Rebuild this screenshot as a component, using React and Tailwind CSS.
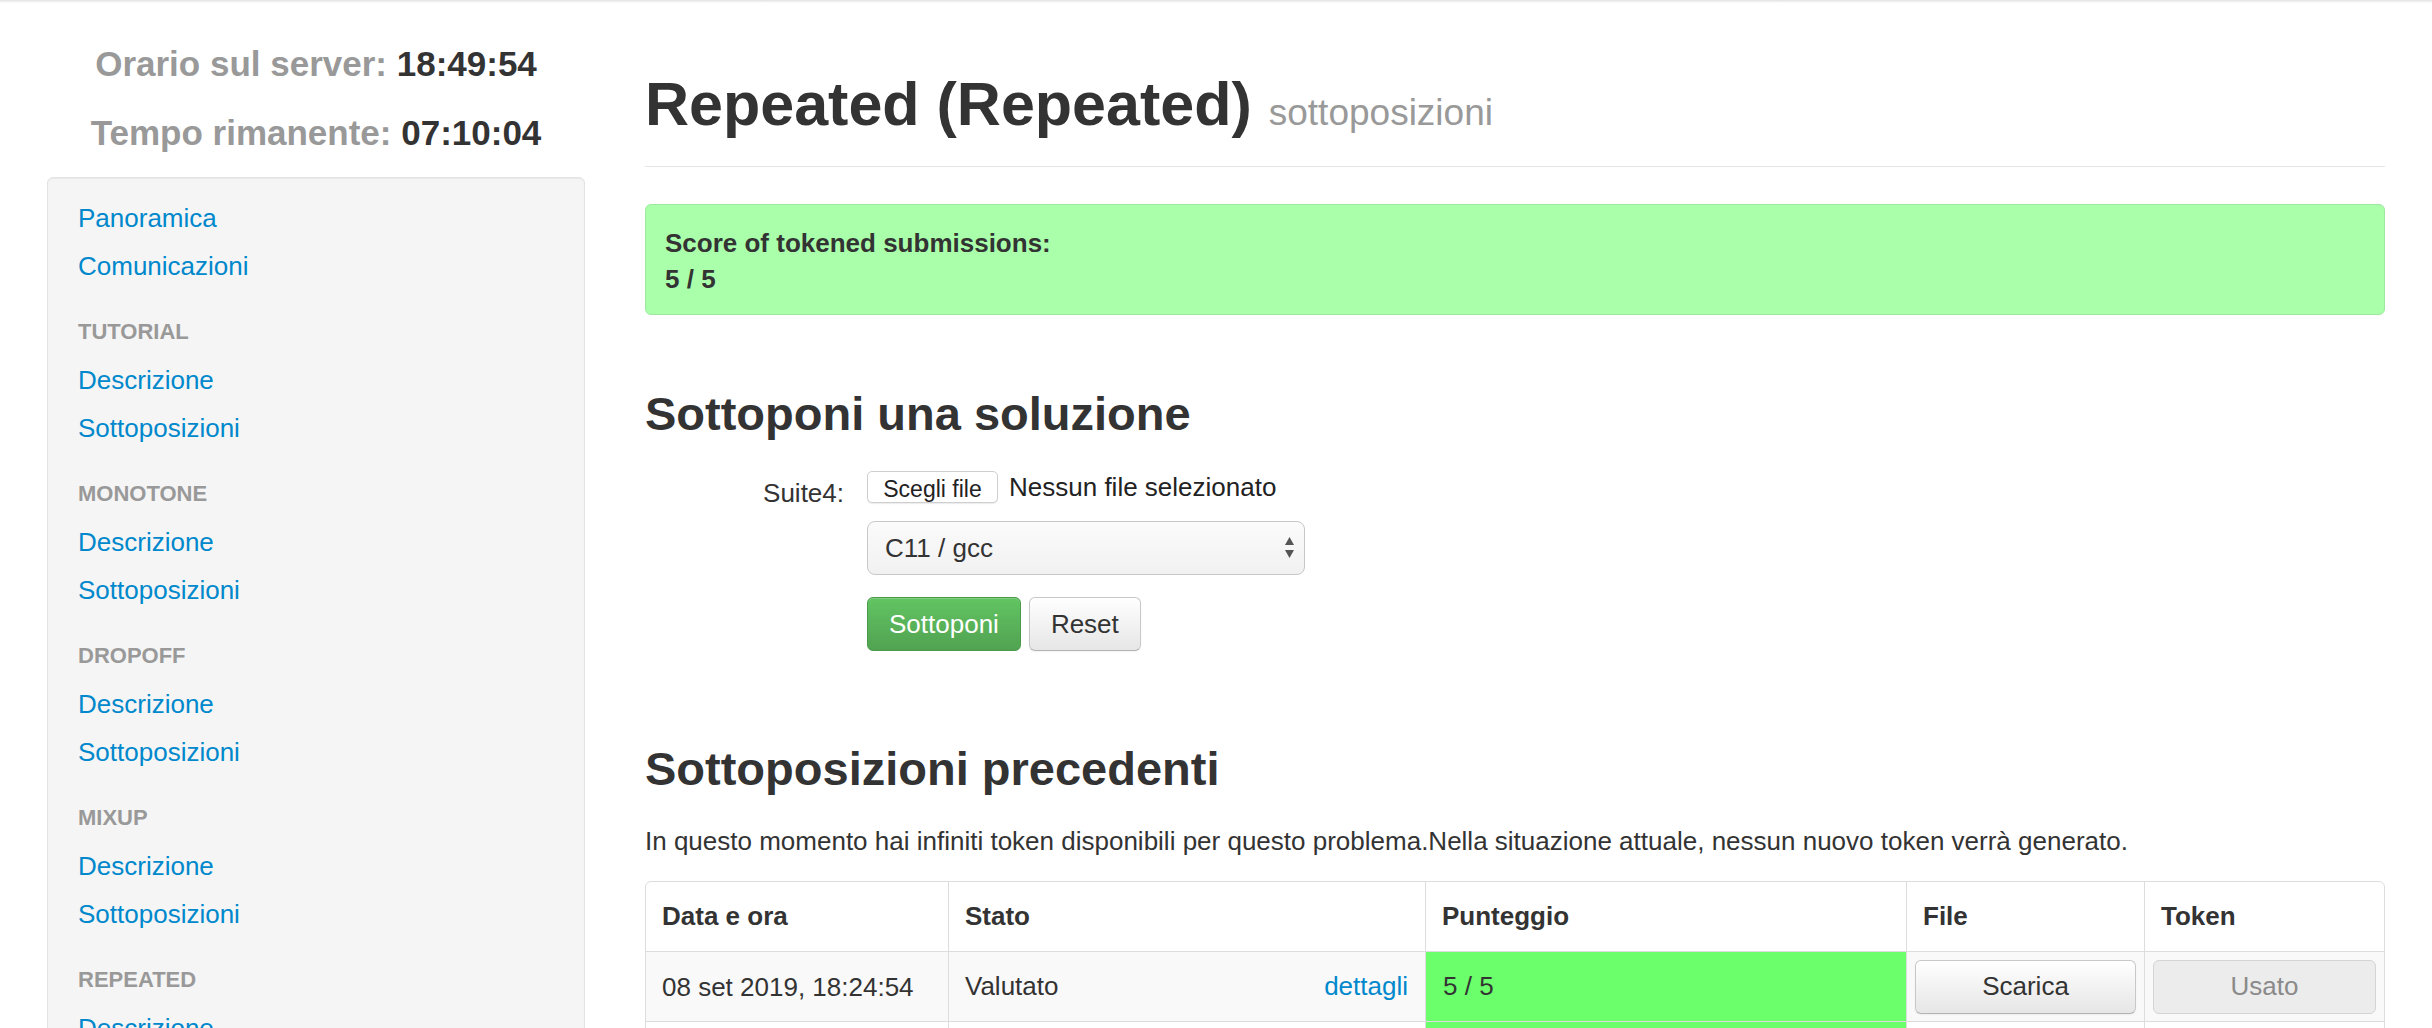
import React from 'react';

const tasks = ['Tutorial', 'Monotone', 'Dropoff', 'Mixup', 'Repeated'];

const btnLight =
  'bg-linear-to-b from-white to-[#e6e6e6] border border-[#c8c8c8] border-b-[#b3b3b3] rounded-[6px] text-[#333] shadow-[inset_0_1px_0_rgba(255,255,255,0.2),0_1px_2px_rgba(0,0,0,0.05)]';

const Sidebar = () => {
  return (
    <aside className="w-[538px] shrink-0 pt-[36px]">
      {/* Clock */}
      <div className="text-center text-[35px] font-bold leading-[50px] text-[#999]">
        Orario sul server: <span className="text-[#333]">18:49:54</span>
      </div>
      <div className="mt-[19px] text-center text-[35px] font-bold leading-[50px] text-[#999]">
        Tempo rimanente: <span className="text-[#333]">07:10:04</span>
      </div>

      {/* Nav well */}
      <div className="mt-[19px] rounded-[6px] border border-[#e3e3e3] bg-[#f5f5f5] px-[30px] pt-[16px] pb-[20px] shadow-[inset_0_1px_1px_rgba(0,0,0,0.05)]">
        <a className="block text-[26px] leading-[48px] text-[#0088cc]">Panoramica</a>
        <a className="block text-[26px] leading-[48px] text-[#0088cc]">Comunicazioni</a>
        {tasks.map((t) => (
          <div key={t}>
            <div className="mt-[18px] text-[22px] font-bold uppercase leading-[48px] text-[#999]">{t}</div>
            <a className="block text-[26px] leading-[48px] text-[#0088cc]">Descrizione</a>
            <a className="block text-[26px] leading-[48px] text-[#0088cc]">Sottoposizioni</a>
          </div>
        ))}
      </div>
    </aside>
  );
};

const Row = ({ date, striped, bottom }) => (
  <div className={`grid grid-cols-[302px_477px_481px_238px_1fr] ${striped ? 'bg-[#f9f9f9]' : 'bg-white'} ${bottom ? '' : 'border-b border-[#ddd]'}`}>
    <div className="flex h-[69px] items-center px-[16px] leading-[36px]">{date}</div>
    <div className="flex h-[69px] items-center justify-between border-l border-[#ddd] pl-[16px] pr-[17px]">
      <span>Valutato</span>
      <a className="text-[#0088cc]">dettagli</a>
    </div>
    <div className="flex h-[69px] items-center border-l border-[#ddd] bg-[#6bff6b] px-[17px]">5 / 5</div>
    <div className="flex h-[69px] items-center border-l border-[#ddd] px-[8px]">
      <button className={`h-[54px] w-full ${btnLight}`}>Scarica</button>
    </div>
    <div className="flex h-[69px] items-center border-l border-[#ddd] px-[8px]">
      <button className="h-[54px] w-full rounded-[6px] border border-[#d4d4d4] bg-[#ececec] text-[#8a8a8a]">Usato</button>
    </div>
  </div>
);

export default function App() {
  return (
    <div className="min-h-screen bg-white font-['Liberation_Sans',Arial,sans-serif] text-[26px] text-[#333]">
      <div className="h-[3px] bg-linear-to-b from-[#e2e2e2] to-white" />
      <div className="flex gap-[60px] px-[47px]">
        <Sidebar />

        <main className="min-w-0 flex-1">
          {/* Page header */}
          <div className="mt-[68px] border-b border-[#e5e5e5] pb-[29px]">
            <h1 className="flex items-baseline text-[61px] font-bold leading-[66px] text-[#333]">
              <span>Repeated (Repeated)</span>
              <span className="ml-[17px] text-[37px] font-normal leading-[40px] text-[#999]">sottoposizioni</span>
            </h1>
          </div>

          {/* Token score */}
          <div className="mt-[37px] rounded-[6px] border border-[#9fe89f] bg-[#aaffaa] px-[19px] pt-[20px] pb-[17px] font-bold leading-[36px] text-[#333]">
            <div>Score of tokened submissions:</div>
            <div>5 / 5</div>
          </div>

          {/* Submit form */}
          <h2 className="mt-[73px] text-[47px] font-bold leading-[52px]">Sottoponi una soluzione</h2>
          <div className="mt-[31px] grid grid-cols-[199px_1fr] gap-x-[23px]">
            <label className="pt-[4px] text-right leading-[36px]">Suite4:</label>
            <div>
              <div className="flex h-[32px] items-center">
                <button className="h-[32px] w-[131px] rounded-[5px] border border-[#cfcfcf] bg-white text-[23px] text-[#222] shadow-[0_1px_1px_rgba(0,0,0,0.08)]">
                  Scegli file
                </button>
                <span className="ml-[11px] text-[#222]">Nessun file selezionato</span>
              </div>
              <div className="mt-[18px] flex h-[54px] w-[438px] items-center justify-between rounded-[8px] border border-[#c8c8c8] bg-linear-to-b from-[#fbfbfb] to-[#f1f1f1] pl-[17px] pr-[10px]">
                <span>C11 / gcc</span>
                <svg width="9" height="22" viewBox="0 0 9 22">
                  <path d="M4.5 0 L9 8 L0 8 Z" fill="#555" />
                  <path d="M0 13 L9 13 L4.5 21 Z" fill="#555" />
                </svg>
              </div>
              <div className="mt-[22px] flex gap-[8px]">
                <button className="h-[54px] rounded-[6px] border border-[#4a9a4a] bg-linear-to-b from-[#62c462] to-[#51a351] px-[21px] text-white shadow-[inset_0_1px_0_rgba(255,255,255,0.2)]">
                  Sottoponi
                </button>
                <button className={`h-[54px] px-[21px] ${btnLight}`}>Reset</button>
              </div>
            </div>
          </div>

          {/* Previous submissions */}
          <h2 className="mt-[92px] text-[47px] font-bold leading-[52px]">Sottoposizioni precedenti</h2>
          <p className="mt-[28px] leading-[36px]">
            In questo momento hai infiniti token disponibili per questo problema.Nella situazione attuale, nessun nuovo token verrà generato.
          </p>

          <div className="mt-[22px] overflow-hidden rounded-t-[6px] border border-[#ddd]">
            <div className="grid grid-cols-[302px_477px_481px_238px_1fr] border-b border-[#ddd] font-bold">
              <div className="flex h-[69px] items-center px-[16px]">Data e ora</div>
              <div className="flex h-[69px] items-center border-l border-[#ddd] px-[16px]">Stato</div>
              <div className="flex h-[69px] items-center border-l border-[#ddd] px-[16px]">Punteggio</div>
              <div className="flex h-[69px] items-center border-l border-[#ddd] px-[16px]">File</div>
              <div className="flex h-[69px] items-center border-l border-[#ddd] px-[16px]">Token</div>
            </div>
            <Row date="08 set 2019, 18:24:54" striped />
            <Row date="08 set 2019, 18:21:37" bottom />
          </div>
        </main>
      </div>
    </div>
  );
}
